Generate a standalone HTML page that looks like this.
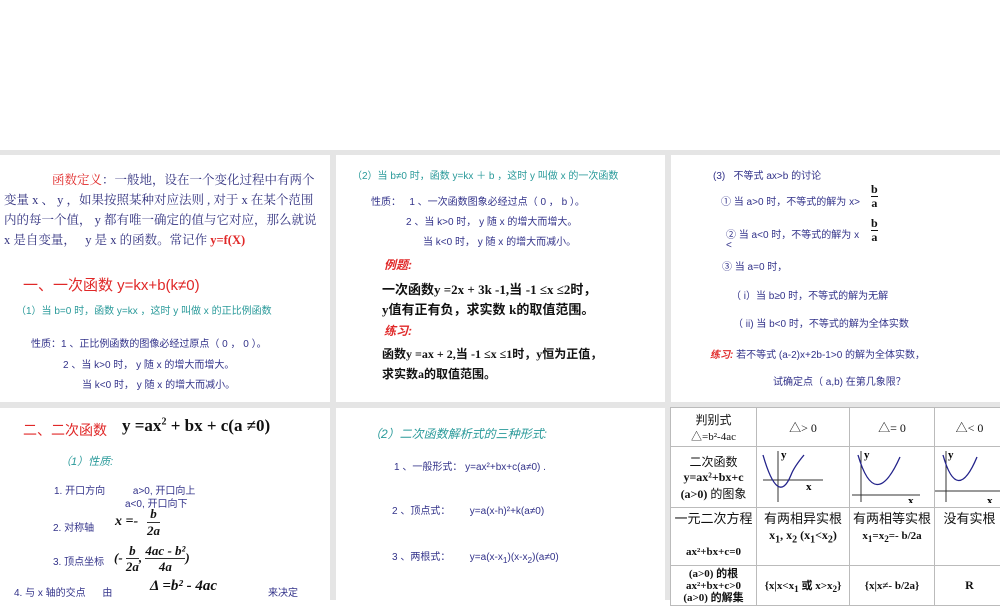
<!DOCTYPE html>
<html><head><meta charset="utf-8"><style>
body{margin:0;width:1000px;height:600px;background:#fff;position:relative;overflow:hidden;font-family:"Liberation Sans","Noto Sans CJK SC",sans-serif}
.bg{position:absolute;left:0;top:150px;width:1000px;height:450px;background:#e5e5e5}
.p{position:absolute;background:#fff}
.t{position:absolute;white-space:pre}
.n{color:#33338a;font-size:10px}
.tl{color:#2a9a9a;font-size:10px}
.r{color:#e02828}
.b{font-weight:bold;color:#111}
.s{font-family:"Liberation Serif","Noto Serif CJK SC",serif}
table{border-collapse:collapse;position:absolute;left:670px;top:407px;table-layout:fixed;width:334px}
td{border:1px solid #bbb;text-align:center;font-family:"Liberation Serif","Noto Sans CJK SC",serif;font-size:12px;color:#111;padding:0;overflow:hidden}
</style></head><body>
<div class="bg"></div>
<div class="p" style="left:0;top:155px;width:330px;height:247px"></div>
<div class="p" style="left:336px;top:155px;width:329px;height:247px"></div>
<div class="p" style="left:671px;top:155px;width:329px;height:247px"></div>
<div class="p" style="left:0;top:408px;width:330px;height:192px"></div>
<div class="p" style="left:336px;top:408px;width:329px;height:192px"></div>
<div class="p" style="left:671px;top:408px;width:329px;height:192px"></div>

<div class="t s" style="left:4px;top:170px;font-size:12.5px;line-height:20px;color:#333380"><span style="margin-left:48px" class="r">函数定义</span>：一般地，设在一个变化过程中有两个
变量 x 、 y ，如果按照某种对应法则 , 对于 x 在某个范围
内的每一个值， y 都有唯一确定的值与它对应，那么就说
x 是自变量，   y 是 x 的函数。常记作 <span class="r b" style="color:#e02828">y=f(X)</span></div>
<div class="t r" style="left:23px;top:274px;font-size:15px">一、一次函数 y=kx+b(k≠0)</div>
<div class="t tl" style="left:16px;top:302px">（1）当 b=0 时，函数 y=kx ，这时 y 叫做 x 的正比例函数</div>
<div class="t n" style="left:31px;top:335px">性质：1 、正比例函数的图像必经过原点（ 0 ， 0 ）。</div>
<div class="t n" style="left:63px;top:356px">2 、当 k&gt;0 时， y 随 x 的增大而增大。</div>
<div class="t n" style="left:82px;top:376px">当 k&lt;0 时， y 随 x 的增大而减小。</div>

<div class="t tl" style="left:352px;top:167px">（2）当 b≠0 时，函数 y=kx ＋ b ，这时 y 叫做 x 的一次函数</div>
<div class="t n" style="left:371px;top:193px">性质：   1 、一次函数图象必经过点（ 0 ， b ）。</div>
<div class="t n" style="left:406px;top:213px">2 、当 k&gt;0 时， y 随 x 的增大而增大。</div>
<div class="t n" style="left:423px;top:233px">当 k&lt;0 时， y 随 x 的增大而减小。</div>
<div class="t r" style="left:384px;top:256px;font-size:12px;font-style:italic;font-weight:bold">例题:</div>
<div class="t b" style="left:382px;top:279px;font-size:13px">一次函数<span class="s">y =2x + 3k -1,</span>当 <span class="s">-1 ≤x ≤2</span>时，</div>
<div class="t b" style="left:382px;top:299px;font-size:13px"><span class="s">y</span>值有正有负，求实数 <span class="s">k</span>的取值范围。</div>
<div class="t r" style="left:384px;top:322px;font-size:12px;font-style:italic;font-weight:bold">练习:</div>
<div class="t b" style="left:382px;top:345px;font-size:12px">函数<span class="s">y =ax + 2,</span>当 <span class="s">-1 ≤x ≤1</span>时，<span class="s">y</span>恒为正值，</div>
<div class="t b" style="left:382px;top:365px;font-size:12px">求实数<span class="s">a</span>的取值范围。</div>

<div class="t n" style="left:713px;top:167px">(3)   不等式 ax&gt;b 的讨论</div>
<div class="t n" style="left:721px;top:193px">① 当 a&gt;0 时，不等式的解为 x&gt;</div>
<div class="t b s" style="left:871px;top:183px;font-size:12px;line-height:13px;text-align:center">b<div style="border-top:1px solid #111">a</div></div>
<div class="t n" style="left:726px;top:226px">② 当 a&lt;0 时，不等式的解为 x</div>
<div class="t n" style="left:726px;top:240px">&lt;</div>
<div class="t b s" style="left:871px;top:217px;font-size:12px;line-height:13px;text-align:center">b<div style="border-top:1px solid #111">a</div></div>
<div class="t n" style="left:722px;top:258px">③ 当 a=0 时，</div>
<div class="t n" style="left:731px;top:287px">（ i）当 b≥0 时，不等式的解为无解</div>
<div class="t n" style="left:733px;top:315px">（ ii) 当 b&lt;0 时，不等式的解为全体实数</div>
<div class="t n" style="left:710px;top:346px"><span class="r" style="font-style:italic;font-weight:bold">练习:</span> 若不等式 (a-2)x+2b-1&gt;0 的解为全体实数，</div>
<div class="t n" style="left:773px;top:373px">试确定点（ a,b) 在第几象限？</div>

<div class="t r" style="left:23px;top:420px;font-size:14px">二、二次函数</div>
<div class="t b s" style="left:122px;top:416px;font-size:17px">y =ax<sup style="font-size:10px">2</sup> + bx + c(a ≠0)</div>
<div class="t tl" style="left:60px;top:453px;font-style:italic;font-size:11px">（1）性质:</div>
<div class="t n" style="left:54px;top:482px">1. 开口方向          a&gt;0, 开口向上</div>
<div class="t n" style="left:125px;top:495px">a&lt;0, 开口向下</div>
<div class="t n" style="left:53px;top:519px">2. 对称轴</div>
<div class="t b s" style="left:115px;top:514px;font-size:14px;font-style:italic">x =-</div>
<div class="t b s" style="left:147px;top:506px;font-size:13px;font-style:italic;line-height:16px;text-align:center">b<div style="border-top:1px solid #333">2a</div></div>
<div class="t n" style="left:53px;top:553px">3. 顶点坐标</div>
<div class="t b s" style="left:114px;top:543px;font-size:13px;font-style:italic;line-height:16px">(- <span style="display:inline-block;text-align:center;vertical-align:middle">b<br><span style="border-top:1px solid #333">2a</span></span>, <span style="display:inline-block;text-align:center;vertical-align:middle"><span style="border-bottom:1px solid #333">4ac - b²</span><br>4a</span>)</div>
<div class="t n" style="left:14px;top:584px">4. 与 x 轴的交点      由</div>
<div class="t b s" style="left:150px;top:578px;font-size:15px;font-style:italic">Δ =b² - 4ac</div>
<div class="t n" style="left:268px;top:584px">来决定</div>

<div class="t tl" style="left:369px;top:425px;font-size:12px;font-style:italic">（2）二次函数解析式的三种形式:</div>
<div class="t n" style="left:394px;top:458px">1 、一般形式： y=ax²+bx+c(a≠0) .</div>
<div class="t n" style="left:392px;top:502px">2 、顶点式：       y=a(x-h)²+k(a≠0)</div>
<div class="t n" style="left:392px;top:548px">3 、两根式：       y=a(x-x<sub>1</sub>)(x-x<sub>2</sub>)(a≠0)</div>

<table>
<colgroup><col style="width:86px"><col style="width:93px"><col style="width:85px"><col style="width:70px"></colgroup>
<tr style="height:39px"><td>判别式<br><span style="font-size:11px">△=b²-4ac</span></td><td>△&gt; 0</td><td>△= 0</td><td>△&lt; 0</td></tr>
<tr style="height:58px"><td>二次函数<br><b>y=ax²+bx+c</b><br><b>(a&gt;0)</b> 的图象</td>
<td><svg width="90" height="56"><line x1="5" y1="33" x2="65" y2="33" stroke="#333"/><line x1="20" y1="4" x2="20" y2="55" stroke="#333"/><text x="23" y="11" font-size="11" font-weight="bold">y</text><text x="48" y="43" font-size="11" font-weight="bold">x</text><path d="M5 8 Q20 60 33 28 Q36 20 46 8" fill="none" stroke="#22228a" stroke-width="1.3"/></svg></td>
<td><svg width="84" height="56"><line x1="2" y1="48" x2="70" y2="48" stroke="#333"/><line x1="11" y1="4" x2="11" y2="55" stroke="#333"/><text x="14" y="11" font-size="11" font-weight="bold">y</text><text x="58" y="57" font-size="11" font-weight="bold">x</text><path d="M8 8 Q25 66 50 10" fill="none" stroke="#22228a" stroke-width="1.3"/></svg></td>
<td><svg width="70" height="56"><line x1="0" y1="44" x2="65" y2="44" stroke="#333"/><line x1="11" y1="4" x2="11" y2="55" stroke="#333"/><text x="13" y="11" font-size="11" font-weight="bold">y</text><text x="52" y="57" font-size="11" font-weight="bold">x</text><path d="M8 8 Q22 58 42 10" fill="none" stroke="#22228a" stroke-width="1.3"/></svg></td></tr>
<tr style="height:58px"><td style="vertical-align:top;font-size:13px">一元二次方程<br><br><b style="font-size:11px">ax²+bx+c=0</b></td><td style="vertical-align:top;font-size:13px">有两相异实根<br><b style="font-size:12px">x<sub>1</sub>, x<sub>2</sub> (x<sub>1</sub>&lt;x<sub>2</sub>)</b></td><td style="vertical-align:top;font-size:13px">有两相等实根<br><b style="font-size:11px">x<sub>1</sub>=x<sub>2</sub>=- b/2a</b></td><td style="vertical-align:top;font-size:13px">没有实根</td></tr>
<tr style="height:40px"><td style="font-size:11px;line-height:12px"><b>(a&gt;0) 的根<br>ax²+bx+c&gt;0<br>(a&gt;0) 的解集</b></td><td style="font-size:11px"><b>{x|x&lt;x<sub>1</sub> 或 x&gt;x<sub>2</sub>}</b></td><td style="font-size:11px"><b>{x|x≠- b/2a}</b></td><td><b>R</b></td></tr>
</table>
</body></html>
